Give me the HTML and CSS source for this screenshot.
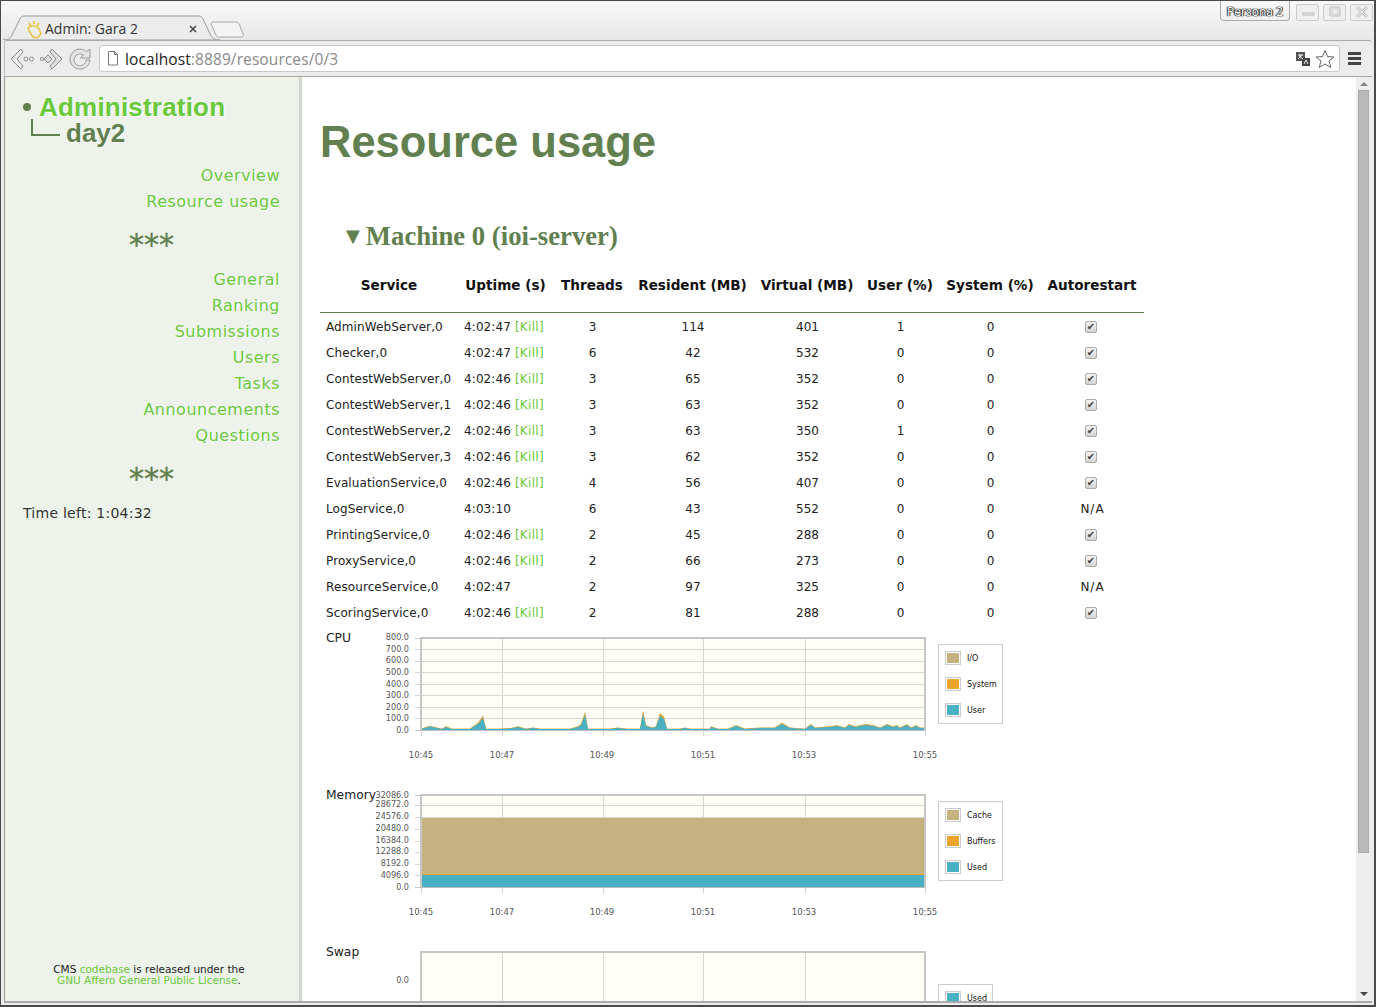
FILE: index.html
```html
<!DOCTYPE html>
<html lang="en">
<head>
    <meta charset="UTF-8">
    <title>Admin: Gara 2</title>
    <link rel="stylesheet" href="styles.css">
</head>
<body>
<div class="window">
    <div class="titlebar">
        <svg class="tabs" width="246" height="39" viewBox="0 0 246 39">
            <path d="M1 39 C7 39 9 37 11 32 L17 20 C18 17 19 15 23 15 L196 15 C200 15 201 17 202 20 L208 33 C210 37 212 39 218 39 Z" fill="#ececec" stroke="#9a9a9a"/>
            <path d="M210 21 C209 22 209 23 210 25 L214 34 C215 36 216 36 218 36 L238 36 C241 36 242 35 241 33 L238 25 C237 22 236 21 233 21 Z" fill="#f3f3f3" stroke="#a8a8a8"/>
            <g transform="translate(2 0)">
                <path d="M25 22 L27 25 M30 20 L30 23 M35 22 L33 25 M24 27 C27 24 32 24 35 28 L37 33 L33 37 L29 36 C27 33 25 30 24 27 Z" fill="none" stroke="#e8c43a" stroke-width="1.500"/>
            </g>
            <text x="43" y="33" class="tab-title">Admin: Gara 2</text>
            <path d="M188 25 L194 31 M194 25 L188 31" stroke="#444" stroke-width="1.500"/>
        </svg>
        <div class="wm">
            <span class="persona">Persona 2</span>
            <span class="wm-btn"><svg width="22" height="15"><rect x="6" y="8" width="11" height="2" fill="none" stroke="#bbb"/></svg></span>
            <span class="wm-btn"><svg width="22" height="15"><rect x="6" y="2" width="10" height="9" rx="1" fill="none" stroke="#bbb"/><rect x="8" y="4" width="6" height="5" fill="none" stroke="#ccc"/></svg></span>
            <span class="wm-btn"><svg width="22" height="15"><path d="M6 2 L16 12 M16 2 L6 12" stroke="#c4c4c4" stroke-width="3"/><path d="M6 2 L16 12 M16 2 L6 12" stroke="#f2f2f2"/></svg></span>
        </div>
    </div>
    <div class="toolbar">
        <svg class="nav" width="86" height="26" viewBox="0 0 86 26">
            <path d="M13 3 L3 13 L13 23 L15 20 L9 13 L15 6 Z" fill="#eee" stroke="#888"/>
            <circle cx="18" cy="13" r="2" fill="#f4f4f4" stroke="#888"/><circle cx="23.500" cy="13" r="2" fill="#f4f4f4" stroke="#888"/>
            <path d="M44 3 L54 13 L44 23 L42 20 L48 13 L42 6 Z" fill="#ddd" stroke="#888"/>
            <path d="M40 9 L44 13 L40 17 L36 13 Z" fill="#ddd" stroke="#888"/>
            <circle cx="34" cy="13" r="1.600" fill="#f4f4f4" stroke="#888"/>
            <path d="M78.500 5.500 A10 10 0 1 0 82 14 L78 14 A6 6 0 1 1 75.500 9 L72.500 12 L82 12 L82 3 Z" fill="#e4e4e4" stroke="#999"/>
        </svg>
        <div class="omnibox">
            <svg width="12" height="15" viewBox="0 0 12 15"><path d="M1.500 .5 H7.500 L10.500 3.500 V14 H1.500 Z M7.500 .5 V3.500 H10.500" fill="#fff" stroke="#777"/></svg>
            <span class="url"><b>localhost</b>:8889/resources/0/3</span>
            <svg class="trans" width="16" height="16" viewBox="0 0 16 16"><rect x="1" y="1" width="9" height="9" fill="#555"/><rect x="7" y="7" width="8" height="8" fill="#444"/><path d="M3 4 H8 M5 3 V5 M3 8 L7 4 M4 5 L8 8 M9 13 L11 9 L13 13" stroke="#eee" fill="none"/></svg>
            <svg width="20" height="20" viewBox="0 0 20 20"><path d="M10 1.500 L12.500 7.500 L19 8 L14 12 L15.800 18.500 L10 15 L4.200 18.500 L6 12 L1 8 L7.500 7.500 Z" fill="#fff" stroke="#666"/></svg>
        </div>
        <div class="menu"><i></i><i></i><i></i></div>
    </div>
    <div class="viewport">
        <aside class="side">
            <div class="crumbs">
                <div class="crumb-top"><span class="dot"></span><a href="#">Administration</a></div>
                <div class="crumb-sub"><span class="elbow"></span>day2</div>
            </div>
            <nav class="menu-links">
                <a href="#">Overview</a>
                <a href="#">Resource usage</a>
            </nav>
            <div class="stars">***</div>
            <nav class="menu-links">
                <a href="#">General</a>
                <a href="#">Ranking</a>
                <a href="#">Submissions</a>
                <a href="#">Users</a>
                <a href="#">Tasks</a>
                <a href="#">Announcements</a>
                <a href="#">Questions</a>
            </nav>
            <div class="stars">***</div>
            <div class="time-left">Time left: 1:04:32</div>
            <footer class="side-foot">CMS <a href="#">codebase</a> is released under the<br><a href="#">GNU Affero General Public License</a>.</footer>
        </aside>
        <main class="content">
            <h1>Resource usage</h1>
            <h2><span class="arrow">▼</span>Machine 0 (ioi-server)</h2>
            <table class="services">
                <colgroup>
                    <col class="c1"><col class="c2"><col class="c3"><col class="c4"><col class="c5"><col class="c6"><col class="c7"><col class="c8">
                </colgroup>
                <thead>
                    <tr><th>Service</th><th>Uptime (s)</th><th>Threads</th><th>Resident (MB)</th><th>Virtual (MB)</th><th>User (%)</th><th>System (%)</th><th>Autorestart</th></tr>
                </thead>
                <tbody>
                    <tr><td>AdminWebServer,0</td><td>4:02:47 <a href="#">[Kill]</a></td><td>3</td><td>114</td><td>401</td><td>1</td><td>0</td><td><span class="check">✔</span></td></tr>
                    <tr><td>Checker,0</td><td>4:02:47 <a href="#">[Kill]</a></td><td>6</td><td>42</td><td>532</td><td>0</td><td>0</td><td><span class="check">✔</span></td></tr>
                    <tr><td>ContestWebServer,0</td><td>4:02:46 <a href="#">[Kill]</a></td><td>3</td><td>65</td><td>352</td><td>0</td><td>0</td><td><span class="check">✔</span></td></tr>
                    <tr><td>ContestWebServer,1</td><td>4:02:46 <a href="#">[Kill]</a></td><td>3</td><td>63</td><td>352</td><td>0</td><td>0</td><td><span class="check">✔</span></td></tr>
                    <tr><td>ContestWebServer,2</td><td>4:02:46 <a href="#">[Kill]</a></td><td>3</td><td>63</td><td>350</td><td>1</td><td>0</td><td><span class="check">✔</span></td></tr>
                    <tr><td>ContestWebServer,3</td><td>4:02:46 <a href="#">[Kill]</a></td><td>3</td><td>62</td><td>352</td><td>0</td><td>0</td><td><span class="check">✔</span></td></tr>
                    <tr><td>EvaluationService,0</td><td>4:02:46 <a href="#">[Kill]</a></td><td>4</td><td>56</td><td>407</td><td>0</td><td>0</td><td><span class="check">✔</span></td></tr>
                    <tr><td>LogService,0</td><td>4:03:10</td><td>6</td><td>43</td><td>552</td><td>0</td><td>0</td><td class="na">N/A</td></tr>
                    <tr><td>PrintingService,0</td><td>4:02:46 <a href="#">[Kill]</a></td><td>2</td><td>45</td><td>288</td><td>0</td><td>0</td><td><span class="check">✔</span></td></tr>
                    <tr><td>ProxyService,0</td><td>4:02:46 <a href="#">[Kill]</a></td><td>2</td><td>66</td><td>273</td><td>0</td><td>0</td><td><span class="check">✔</span></td></tr>
                    <tr><td>ResourceService,0</td><td>4:02:47</td><td>2</td><td>97</td><td>325</td><td>0</td><td>0</td><td class="na">N/A</td></tr>
                    <tr><td>ScoringService,0</td><td>4:02:46 <a href="#">[Kill]</a></td><td>2</td><td>81</td><td>288</td><td>0</td><td>0</td><td><span class="check">✔</span></td></tr>
                </tbody>
            </table>

            <section class="chart">
                <div class="chart-name">CPU</div>
                <svg width="578" height="157" viewBox="360 625 578 157">
                    <defs>
                        <polygon id="cpu-area" points="421,730 421,729 430,726.500 437,728 442,729 446,727 452,729 470,729 478,724 483,718 486,729 500,729 510,728.500 518,727 526,729 533,728 540,729 570,729 578,727 581,725 585,715 588,729 610,729 618,728 626,729 640,729 643,714 646,726 652,728 656,727 660,716 664,719 667,729 680,729 685,728 690,729 710,729 711,727 718,729 728,729 736,726 745,729 760,728 775,728 782,724 790,728 805,729 811,725 815,728 830,727 837,726 845,728 849,725 855,727 866,725 873,726 880,728 887,725 893,727 897,726 900,728 907,725 911,728 916,726 920,728 925,728 925,730"/>
                    </defs>
                    <rect x="421" y="638" width="504" height="92" class="plot-bg"/>
                    <path class="grid" d="M415 649H925M415 661H925M415 672H925M415 684H925M415 695H925M415 707H925M415 718H925M502 638V736M603 638V736M703 638V736M805 638V736M421 730V736M925 730V736"/>
                    <path class="tick" d="M415 638H421M415 730H421"/>
                    <use href="#cpu-area" fill="#c5b27f" transform="translate(0 730) scale(1 1.220) translate(0 -730)"/>
                    <use href="#cpu-area" fill="#eba52a" transform="translate(0 730) scale(1 1.150) translate(0 -730)"/>
                    <use href="#cpu-area" fill="#4ab0c4"/>
                    <path class="frame" d="M421 730V638H925V730"/>
                    <path class="base" d="M421 730H925"/>
                    <g class="ylab">
                        <text x="409" y="640">800.0</text><text x="409" y="652">700.0</text><text x="409" y="663">600.0</text><text x="409" y="675">500.0</text><text x="409" y="687">400.0</text><text x="409" y="698">300.0</text><text x="409" y="710">200.0</text><text x="409" y="721">100.0</text><text x="409" y="733">0.0</text>
                    </g>
                    <g class="xlab">
                        <text x="421" y="758">10:45</text><text x="502" y="758">10:47</text><text x="602" y="758">10:49</text><text x="703" y="758">10:51</text><text x="804" y="758">10:53</text><text x="925" y="758">10:55</text>
                    </g>
                </svg>
                <div class="legend">
                    <div class="leg-row"><i class="sw tan"></i>I/O</div>
                    <div class="leg-row"><i class="sw orange"></i>System</div>
                    <div class="leg-row"><i class="sw teal"></i>User</div>
                </div>
            </section>

            <section class="chart">
                <div class="chart-name">Memory</div>
                <svg width="578" height="157" viewBox="360 782 578 157">
                    <rect x="421" y="795" width="504" height="92" class="plot-bg"/>
                    <path class="grid" d="M415 805H925M415 817H925M415 829H925M415 841H925M415 852H925M415 864H925M415 875H925M502 795V893M603 795V893M703 795V893M805 795V893M421 887V893M925 887V893"/>
                    <path class="tick" d="M415 795H421M415 887H421"/>
                    <rect x="421" y="818" width="504" height="57" fill="#c5b27f"/>
                    <rect x="421" y="874" width="504" height="1" fill="#eba52a"/>
                    <rect x="421" y="875" width="504" height="12" fill="#4ab0c4"/>
                    <path class="frame" d="M421 887V795H925V887"/>
                    <path class="base" d="M421 887H925"/>
                    <g class="ylab">
                        <text x="409" y="798">32086.0</text><text x="409" y="807">28672.0</text><text x="409" y="819">24576.0</text><text x="409" y="831">20480.0</text><text x="409" y="843">16384.0</text><text x="409" y="854">12288.0</text><text x="409" y="866">8192.0</text><text x="409" y="878">4096.0</text><text x="409" y="890">0.0</text>
                    </g>
                    <g class="xlab">
                        <text x="421" y="915">10:45</text><text x="502" y="915">10:47</text><text x="602" y="915">10:49</text><text x="703" y="915">10:51</text><text x="804" y="915">10:53</text><text x="925" y="915">10:55</text>
                    </g>
                </svg>
                <div class="legend">
                    <div class="leg-row"><i class="sw tan"></i>Cache</div>
                    <div class="leg-row"><i class="sw orange"></i>Buffers</div>
                    <div class="leg-row"><i class="sw teal"></i>Used</div>
                </div>
            </section>

            <section class="chart">
                <div class="chart-name">Swap</div>
                <svg width="578" height="70" viewBox="360 939 578 70">
                    <rect x="421" y="952" width="504" height="60" class="plot-bg"/>
                    <path class="grid" d="M502 952V1009M603 952V1009M703 952V1009M805 952V1009"/>
                    <path class="frame" d="M421 1009V952H925V1009"/>
                    <g class="ylab"><text x="409" y="983">0.0</text></g>
                </svg>
                <div class="legend swap-legend">
                    <div class="leg-row"><i class="sw teal"></i>Used</div>
                </div>
            </section>
        </main>
        <div class="scrollbar">
            <span class="sb-up"></span>
            <div class="sb-track"><div class="sb-thumb"></div></div>
            <span class="sb-down"></span>
        </div>
    </div>
</div>
</body>
</html>
```

FILE: styles.css
```css
*{
    margin: 0;
    padding: 0;
    box-sizing: border-box;
}
html,body{
    height: 100%;
    overflow: hidden;
    background: #4a4a4a;
}
a{
    color: #6ac83b;
    text-decoration: none;
}
.window{
    display: flex;
    flex-direction: column;
    height: 1007px;
    border: 1px solid #4a4a4a;
    border-width: 1px 2px 2px 1px;
    background: #ececec;
    font-family: "DejaVu Sans", sans-serif;
    color: #222;
}

/* browser chrome */
.titlebar{
    display: flex;
    justify-content: space-between;
    align-items: flex-start;
    height: 39px;
    padding-left: 1px;
    background: linear-gradient(#f8f8f8, #e8e8e8);
}
.tabs{
    display: block;
}
.tab-title{
    font: 14px "Open Sans", sans-serif;
    fill: #333;
}
.wm{
    display: flex;
    gap: 4px;
    padding-right: 1px;
}
.persona{
    width: 70px;
    height: 20px;
    margin-right: 2px;
    border: 1px solid #aaa;
    border-top: 0;
    border-radius: 0 0 4px 4px;
    font: 12px/21px "Open Sans", sans-serif;
    text-align: center;
    color: #fff;
    text-shadow: 0 0 1px #222, 0 0 1px #222, 1px 0 1px #222, -1px 0 1px #222;
}
.wm-btn{
    display: block;
    width: 23px;
    height: 17px;
    margin-top: 3px;
    border: 1px solid #ccc;
    border-radius: 2px;
    background: #efefef;
}
.wm-btn svg{
    display: block;
}
.toolbar{
    display: flex;
    align-items: center;
    height: 37px;
    margin: 0 2px 0 3px;
    padding-left: 3px;
    border-top: 1px solid #aaa;
    border-bottom: 1px solid #a8a8a8;
    border-left: 1px solid #bbb;
    border-radius: 3px 3px 0 0;
    background: #ececec;
}
.nav{
    display: block;
    flex: none;
    margin-right: 5px;
}
.omnibox{
    display: flex;
    align-items: center;
    flex: 1;
    height: 27px;
    padding: 0 4px 0 7px;
    border: 1px solid #c8c8c8;
    border-radius: 3px;
    background: #fff;
}
.url{
    flex: 1;
    margin-left: 6px;
    font: 15.500px "Open Sans", sans-serif;
    letter-spacing: .1px;
    color: #8a8a8a;
}
.url b{
    font-weight: normal;
    color: #222;
}
.trans{
    margin-right: 4px;
}
.menu{
    display: flex;
    flex-direction: column;
    gap: 2px;
    width: 13px;
    margin: 0 11px 0 8px;
}
.menu i{
    display: block;
    height: 3px;
    background: #444;
}

/* page */
.viewport{
    display: flex;
    flex: 1;
    min-height: 0;
    margin: 0 2px 2px 3px;
    border-bottom: 2px solid #aaa;
    border-left: 1px solid #999;
    overflow: hidden;
    background: #fff;
}
.side{
    position: relative;
    flex: none;
    width: 297px;
    border-right: 3px solid #d3d8cf;
    background: #edf3ea;
}
.crumbs{
    padding: 17px 0 0 18px;
    font: bold 26px/26px "Liberation Sans", sans-serif;
    text-shadow: 1px 1px 1px #fff;
    color: #627f4f;
}
.crumb-top{
    display: flex;
    align-items: center;
}
.crumb-top a{
    letter-spacing: .2px;
}
.dot{
    width: 8px;
    height: 8px;
    margin-right: 8px;
    border-radius: 50%;
    background: #627f4f;
}
.crumb-sub{
    display: flex;
    align-items: center;
}
.elbow{
    width: 29px;
    height: 17px;
    margin: -12px 6px 0 8px;
    border-left: 2px solid #627f4f;
    border-bottom: 2px solid #627f4f;
}
.menu-links{
    display: flex;
    flex-direction: column;
    align-items: flex-end;
    padding-right: 19px;
    font-size: 16px;
    line-height: 26px;
    letter-spacing: .5px;
    text-shadow: 1px 1px 1px #fff;
}
.crumbs + .menu-links{
    margin-top: 17px;
}
.stars{
    height: 34px;
    margin: 13px 0 5px;
    padding-left: 124px;
    font: 30px/34px "DejaVu Sans", sans-serif;
    -webkit-text-stroke: .4px #627f4f;
    color: #627f4f;
}
.time-left{
    margin-top: 9px;
    padding-left: 18px;
    font-size: 14px;
    letter-spacing: .25px;
    color: #333;
}
.side-foot{
    position: absolute;
    left: 0;
    right: 0;
    bottom: 15px;
    padding-right: 6px;
    font-size: 10.500px;
    line-height: 11px;
    text-align: center;
    color: #222;
}
.content{
    flex: 1;
    min-width: 0;
    padding-left: 18px;
    overflow: hidden;
}
h1{
    margin-top: 36px;
    font: bold 43.500px/58px "Liberation Sans", sans-serif;
    color: #627f4f;
}
h2{
    margin: 49px 0 0 26px;
    font: bold 26.700px/32px "Liberation Serif", serif;
    color: #627f4f;
}
.arrow{
    margin-right: 6px;
    font-family: "DejaVu Sans", sans-serif;
    font-size: 18px;
    vertical-align: 3px;
}
.services{
    width: 824px;
    margin-top: 12px;
    table-layout: fixed;
    border-collapse: collapse;
    font-size: 12px;
    letter-spacing: .1px;
}
.c1{ width: 138px; }
.c2{ width: 95px; }
.c3{ width: 78px; }
.c4{ width: 123px; }
.c5{ width: 106px; }
.c6{ width: 80px; }
.c7{ width: 100px; }
.c8{ width: 104px; }
.services th{
    height: 48px;
    padding-bottom: 6px;
    border-bottom: 1px solid #627f4f;
    font-size: 13.600px;
    letter-spacing: 0;
    color: #111;
    white-space: nowrap;
}
.services td{
    height: 26px;
    padding-left: 1px;
    text-align: center;
    white-space: nowrap;
}
.services tbody tr:first-child td{
    height: 28px;
    padding-top: 1px;
}
.services tbody tr:last-child td{
    height: 25px;
}
.services td:first-child,
.services td:nth-child(2){
    padding-left: 6px;
    text-align: left;
}
.services a{
    letter-spacing: .3px;
}
.na{
    letter-spacing: 1px;
}
.check{
    display: inline-block;
    width: 12px;
    height: 12px;
    margin-right: 3px;
    border: 1px solid #aaa;
    border-radius: 2px;
    background: linear-gradient(#f4f4f4, #d4d4d4);
    font-size: 10px;
    line-height: 10px;
    letter-spacing: 0;
    text-align: center;
    color: #444;
    vertical-align: 1px;
}

/* charts */
.chart{
    display: flex;
    align-items: flex-start;
    height: 157px;
}
.chart-name{
    flex: none;
    width: 40px;
    padding: 6px 0 0 6px;
    font-size: 12.300px;
    line-height: 14px;
}
.chart svg{
    display: block;
    flex: none;
    overflow: hidden;
}
.chart:last-of-type{
    height: 70px;
}
.plot-bg{
    fill: #fffdf6;
}
.grid{
    fill: none;
    stroke: #d6d6d6;
    stroke-width: 1;
    shape-rendering: crispEdges;
}
.tick{
    stroke: #c8c8c8;
    shape-rendering: crispEdges;
}
.frame{
    fill: none;
    stroke: #c6c6c6;
    stroke-width: 2;
    shape-rendering: crispEdges;
}
.base{
    stroke: #bdbdbd;
    shape-rendering: crispEdges;
}
.ylab text,
.xlab text{
    font: 8.500px "DejaVu Sans", sans-serif;
    fill: #555;
}
.ylab text{
    font-size: 8.100px;
    text-anchor: end;
}
.xlab text{
    text-anchor: middle;
}
.legend{
    width: 65px;
    margin-top: 19px;
    border: 1px solid #ccc;
    background: #fff;
    font-size: 8px;
    color: #111;
}
.swap-legend{
    width: 55px;
    margin-top: 45px;
}
.leg-row{
    display: flex;
    align-items: center;
    gap: 6px;
    height: 26px;
    padding-left: 6px;
    white-space: nowrap;
}
.sw{
    display: block;
    flex: none;
    width: 16px;
    height: 14px;
    border: 1px solid #ccc;
    box-shadow: inset 0 0 0 1px #fff;
}
.tan{ background: #c5b27f; }
.orange{ background: #eba52a; }
.teal{ background: #4ab0c4; }

/* scrollbar */
.scrollbar{
    display: flex;
    flex-direction: column;
    align-items: center;
    flex: none;
    width: 16px;
    background: #eee;
}
.sb-up,
.sb-down{
    flex: none;
    width: 0;
    height: 0;
    border-left: 4px solid transparent;
    border-right: 4px solid transparent;
}
.sb-up{
    margin-top: 5px;
    border-bottom: 4px solid #888;
}
.sb-down{
    margin-bottom: 5px;
    border-top: 4px solid #444;
}
.sb-track{
    flex: 1;
    width: 100%;
    padding: 4px 3px 0 2px;
}
.sb-thumb{
    height: 763px;
    border: 1px solid #aaa;
    background: #b9b9b9;
}
```
